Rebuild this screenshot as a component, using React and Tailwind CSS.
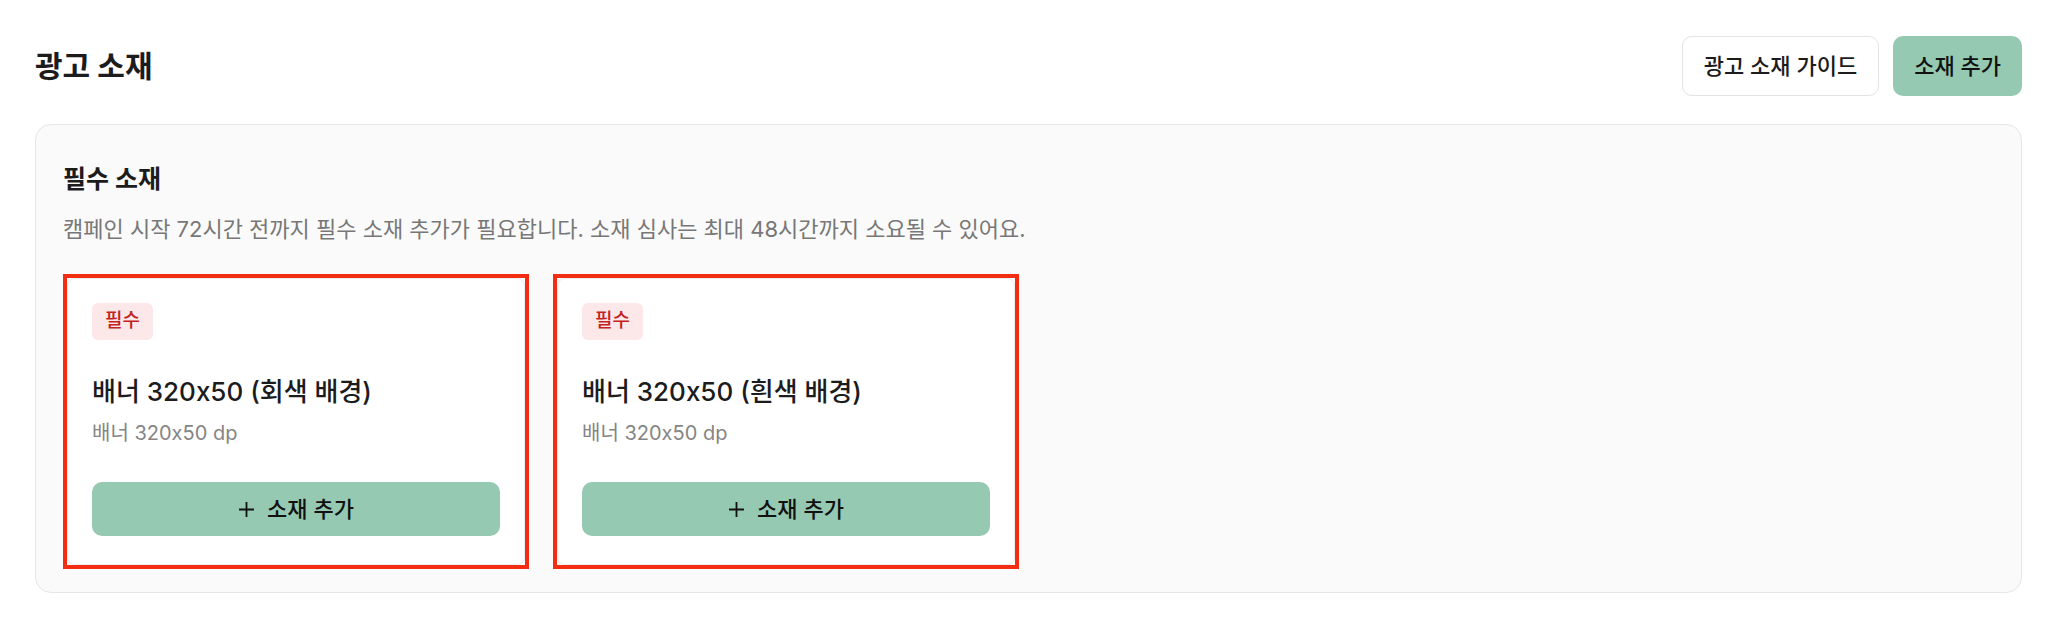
export default function App() {
  const cards = [
    { title: "배너 320x50 (회색 배경)", sub: "배너 320x50 dp" },
    { title: "배너 320x50 (흰색 배경)", sub: "배너 320x50 dp" },
  ];
  return (
    <div className="min-h-screen bg-white pl-[35px] pr-[26px] pt-[36px] font-['Inter','Noto_Sans_CJK_KR',sans-serif] text-[#1a1a1a]">
      <div className="flex items-center justify-between">
        <h1 className="text-[30px] font-bold text-[#1c1c1c]">광고 소재</h1>
        <div className="flex gap-[14px]">
          <button className="flex h-[60px] items-center rounded-[10px] border border-[#e3e3e3] bg-white px-[21px] text-[22px] font-medium text-[#1c1c1c]">
            광고 소재 가이드
          </button>
          <button className="flex h-[60px] items-center rounded-[10px] bg-[#95c9b2] px-[21px] text-[22px] font-medium text-[#111]">
            소재 추가
          </button>
        </div>
      </div>

      <div className="mt-[28px] rounded-[16px] border border-[#e6e6e6] bg-[#fafafa] px-[27px] pb-[23px] pt-[38px]">
        <h2 className="text-[25px] font-bold leading-[32px] text-[#1c1c1c]">필수 소재</h2>
        <p className="mt-[18px] text-[22px] leading-[32px] text-[#777]">
          캠페인 시작 72시간 전까지 필수 소재 추가가 필요합니다. 소재 심사는 최대 48시간까지 소요될 수 있어요.
        </p>
        <div className="mt-[29px] flex gap-[24px]">
          {cards.map((c) => (
            <div key={c.title} className="w-[466px] border-[4px] border-[#f22d12]">
              <div className="rounded-[8px] border border-[#ececec] bg-white px-[24px] pb-[28px] pt-[24px]">
                <span className="inline-flex h-[37px] items-center rounded-[6px] bg-[#fde8e9] px-[13px] text-[19px] font-medium text-[#c42222]">
                  필수
                </span>
                <div className="mt-[36px] text-[26px] font-medium leading-[32px] text-[#1c1c1c]">{c.title}</div>
                <div className="mt-[10px] text-[20px] leading-[30px] text-[#858585]">{c.sub}</div>
                <button className="mt-[34px] flex h-[54px] w-full items-center justify-center gap-[12px] rounded-[10px] bg-[#95c9b2] text-[22px] font-medium text-[#111]">
                  <svg width="17" height="17" viewBox="0 0 16 16" fill="none" stroke="#111" strokeWidth="1.7">
                    <path d="M8 1v14M1 8h14" />
                  </svg>
                  소재 추가
                </button>
              </div>
            </div>
          ))}
        </div>
      </div>
    </div>
  );
}
